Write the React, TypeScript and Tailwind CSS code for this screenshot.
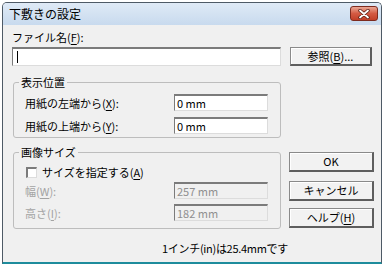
import React from "react";

const ui = '"Noto Sans CJK JP", "Noto Sans", "Liberation Sans", sans-serif';

function Key({ children }: { children: React.ReactNode }) {
  return <u className="underline underline-offset-[2px]">{children}</u>;
}

function Field({ value, disabled }: { value: string; disabled?: boolean }) {
  return (
    <div
      className={`ml-auto mr-[12px] w-[94px] h-[17px] flex items-center pl-[2px] text-[11px] leading-none border-t-2 border-l border-r border-b border-[#7b7b7b] border-r-[#dcdcdc] border-b-[#dcdcdc] ${
        disabled ? "bg-[#f0f0f0] text-[#8f8f8f]" : "bg-white text-black"
      }`}
    >
      {value}
    </div>
  );
}

function Btn({
  children,
  className,
}: {
  children: React.ReactNode;
  className: string;
}) {
  return (
    <button
      className={`h-[20px] flex items-center justify-center bg-[#f2f2f2] border border-[#8a8a8a] border-r-2 border-b-2 border-r-[#5e5e5e] border-b-[#5e5e5e] shadow-[inset_1px_1px_0_#ffffff] text-[11px] leading-none text-black ${className}`}
    >
      {children}
    </button>
  );
}

function Row({
  label,
  value,
  disabled,
  className,
}: {
  label: React.ReactNode;
  value: string;
  disabled?: boolean;
  className: string;
}) {
  return (
    <div className={`flex items-center ${className}`}>
      <span
        className={`ml-[6px] text-[11px] leading-[14px] ${
          disabled ? "text-[#a3a3a3]" : "text-black"
        }`}
      >
        {label}
      </span>
      <Field value={value} disabled={disabled} />
    </div>
  );
}

export default function App() {
  return (
    <div
      className="w-[385px] h-[268px] bg-white overflow-hidden pt-[2px] pl-[2px]"
      style={{ fontFamily: ui }}
    >
      <div className="w-[380px] h-[262px] flex flex-col border-x border-t border-[#4e5a66] border-b-2 border-b-[#1e8c9c] rounded-t-[5px] overflow-hidden">
        {/* title bar */}
        <div className="h-[22px] shrink-0 flex items-start justify-between pl-[6px] pr-[3px] bg-linear-to-b from-[#dfeaf6] to-[#c8daee]">
          <span className="mt-[3px] text-[12px] leading-[16px] text-black">
            下敷きの設定
          </span>
          <div className="mt-[3px] w-[28px] h-[15px] flex items-center justify-center rounded-[3px] border border-[#7d2b1f] bg-linear-to-b from-[#e9a795] via-[#d45a43] to-[#c23f28]">
            <svg width="12" height="10" viewBox="0 0 12 10">
              <path
                d="M2 1.5 L10 8.5 M10 1.5 L2 8.5"
                stroke="#5a1e14"
                strokeWidth="3.4"
                strokeLinecap="round"
              />
              <path
                d="M2 1.5 L10 8.5 M10 1.5 L2 8.5"
                stroke="#ffffff"
                strokeWidth="1.8"
                strokeLinecap="round"
              />
            </svg>
          </div>
        </div>

        {/* client area */}
        <div className="flex-1 bg-[#f0f0f0] pl-[9px] pt-[5px] text-black">
          <div className="text-[11px] leading-[14px]">
            ファイル名(<Key>F</Key>):
          </div>
          <div className="mt-[3px] flex">
            <div className="w-[269px] h-[19px] flex items-center pl-[4px] bg-white border-t-2 border-l border-r border-b border-[#7b7b7b] border-r-[#dcdcdc] border-b-[#dcdcdc]">
              <span className="w-[1px] h-[12px] bg-black" />
            </div>
            <Btn className="ml-[9px] w-[82px] !h-[19px]">
              参照(<Key>B</Key>)...
            </Btn>
          </div>

          <div className="mt-[9px] flex">
            <div className="flex flex-col">
              <fieldset className="ml-[1px] w-[268px] border border-[#bdbdbd] rounded-[3px] pl-[5px] pb-[3px]">
                <legend className="px-[2px] text-[11px] leading-[14px]">
                  表示位置
                </legend>
                <Row
                  className="mt-[5px]"
                  label={
                    <>
                      用紙の左端から(<Key>X</Key>):
                    </>
                  }
                  value="0 mm"
                />
                <Row
                  className="mt-[6px]"
                  label={
                    <>
                      用紙の上端から(<Key>Y</Key>):
                    </>
                  }
                  value="0 mm"
                />
              </fieldset>

              <fieldset className="mt-[7px] ml-[1px] w-[268px] border border-[#bdbdbd] rounded-[3px] pl-[5px] pb-[7px]">
                <legend className="px-[2px] text-[11px] leading-[14px]">
                  画像サイズ
                </legend>
                <div className="mt-[6px] h-[14px] flex items-center">
                  <span className="ml-[7px] w-[11px] h-[11px] bg-white border-t-2 border-l-2 border-r border-b border-[#7b7b7b] border-r-[#dcdcdc] border-b-[#dcdcdc]" />
                  <span className="ml-[5px] text-[11px] leading-[14px]">
                    サイズを指定する(<Key>A</Key>)
                  </span>
                </div>
                <Row
                  className="mt-[3px]"
                  disabled
                  label={
                    <>
                      幅(<Key>W</Key>):
                    </>
                  }
                  value="257 mm"
                />
                <Row
                  className="mt-[5px]"
                  disabled
                  label={
                    <>
                      高さ(<Key>I</Key>):
                    </>
                  }
                  value="182 mm"
                />
              </fieldset>
            </div>

            <div className="ml-[8px] flex flex-col">
              <Btn className="mt-[77px] w-[85px]">OK</Btn>
              <Btn className="mt-[9px] w-[85px]">キャンセル</Btn>
              <Btn className="mt-[7px] w-[85px]">
                ヘルプ(<Key>H</Key>)
              </Btn>
            </div>
          </div>

          <div className="mt-[12px] ml-[150px] text-[11px] leading-[14px] tracking-[-0.3px]">
            1インチ(in)は25.4mmです
          </div>
        </div>
      </div>
    </div>
  );
}
